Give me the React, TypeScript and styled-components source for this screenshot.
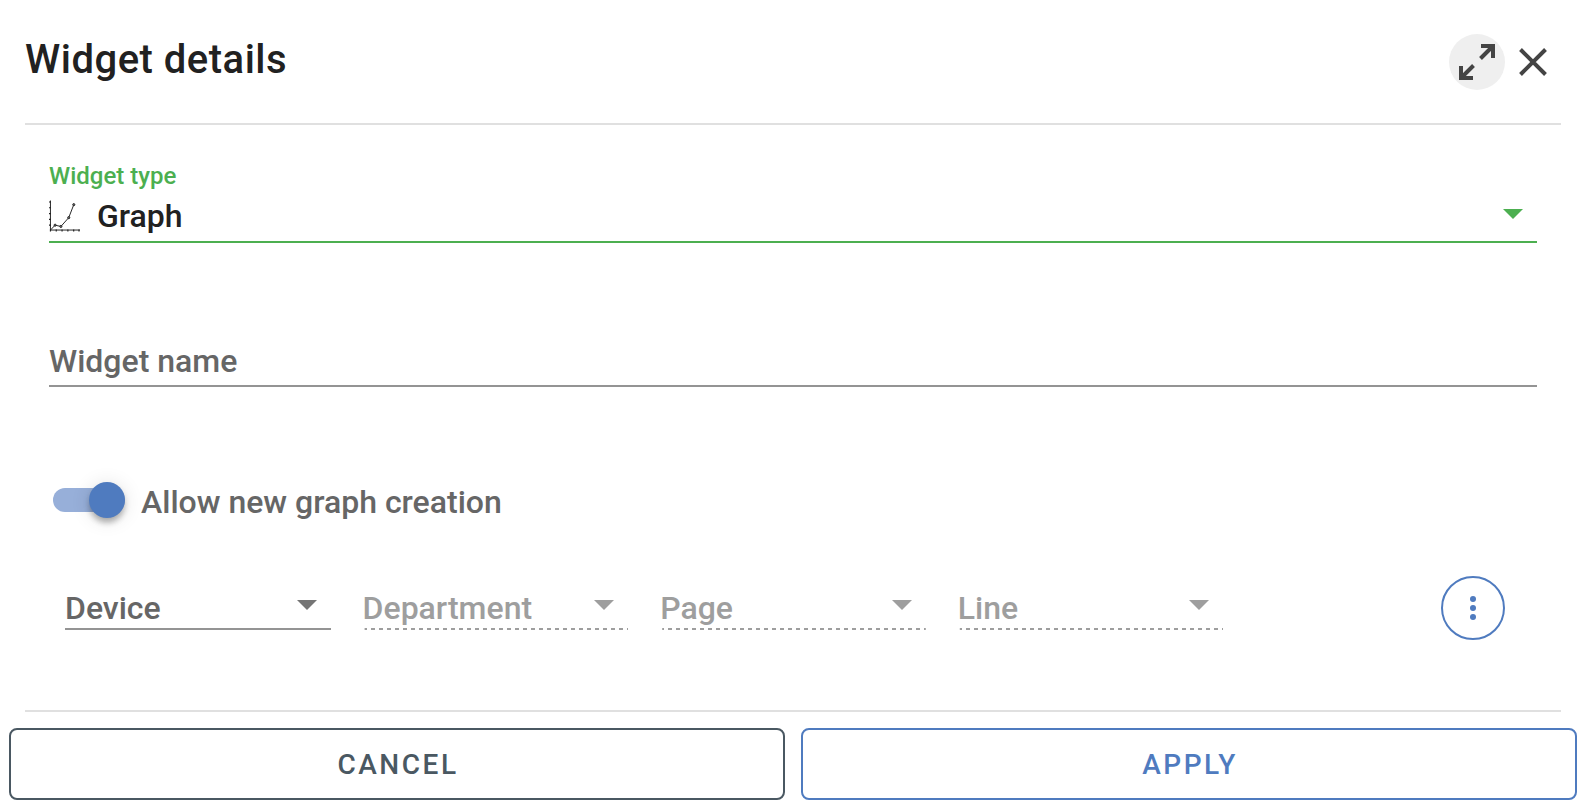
import React, { useState } from "react";
import styled, { createGlobalStyle, css } from "styled-components";

const green = "#4caf50";
const blue = "#4f7bbf";
const slate = "#4a5862";
const ink = "#212121";
const muted = "#666666";
const faded = "#9e9e9e";
const line = "#e0e0e0";

const GlobalStyle = createGlobalStyle`
  *, *::before, *::after { box-sizing: border-box; }
  body {
    margin: 0;
    background: #ffffff;
    color: ${ink};
    font-family: Roboto, "Liberation Sans", sans-serif;
    font-size: 32px;
    font-weight: 500;
  }
  button, input, select { font: inherit; color: inherit; }
`;

const Dialog = styled.main`
  padding: 0 11px 8px 9px;
`;

const Header = styled.header`
  display: flex;
  justify-content: space-between;
  align-items: flex-start;
  margin: 0 16px;
  padding: 34px 0 33px;
  border-bottom: 2px solid ${line};
`;

const Title = styled.h1`
  margin: 0;
  font-size: 40px;
  font-weight: 500;
  line-height: 52px;
  letter-spacing: 0.0125em;
`;

const HeaderActions = styled.div`
  display: flex;
`;

const IconButton = styled.button<{ $filled?: boolean }>`
  display: grid;
  place-items: center;
  width: 56px;
  height: 56px;
  padding: 0;
  border: 0;
  border-radius: 50%;
  background: ${(p) => (p.$filled ? "#efefef" : "transparent")};
  color: #444444;
  cursor: pointer;
`;

const Content = styled.form`
  margin: 0 16px;
  padding: 37px 24px 70px;
  border-bottom: 2px solid ${line};
`;

const TypeField = styled.div`
  margin-bottom: 94px;
`;

const FieldLabel = styled.label`
  display: block;
  color: ${green};
  font-size: 24px;
  line-height: 28px;
`;

const control = css`
  display: block;
  width: 100%;
  min-width: 0;
  padding: 0;
  border: 0;
  border-radius: 0;
  outline: 0;
  background: transparent;
  appearance: none;
`;

const SelectBox = styled.div<{ $tone: "active" | "plain" | "disabled" }>`
  position: relative;
  display: flex;
  align-items: center;
  gap: 17px;
  color: ${(p) => (p.$tone === "active" ? ink : p.$tone === "plain" ? muted : faded)};
  border-bottom: 2px solid
    ${(p) => (p.$tone === "active" ? green : p.$tone === "plain" ? "#949494" : "transparent")};

  ${(p) =>
    p.$tone === "disabled" &&
    css`
      &::after {
        content: "";
        position: absolute;
        inset: 100% 0 auto;
        height: 2px;
        background: repeating-linear-gradient(to right, ${faded} 0 4px, transparent 4px 8px);
        clip-path: inset(0 0 0 2px);
      }
    `}
`;

const Select = styled.select<{ $tall?: boolean }>`
  ${control}
  height: ${(p) => (p.$tall ? 51 : 40)}px;
  opacity: 1;
  cursor: pointer;
  &:disabled { cursor: default; }
`;

const Caret = styled.svg<{ $tall?: boolean; $color: string }>`
  position: absolute;
  top: ${(p) => (p.$tall ? 19 : 12)}px;
  right: 14px;
  width: 20px;
  height: 10px;
  fill: ${(p) => p.$color};
  pointer-events: none;
`;

const NameInput = styled.input`
  ${control}
  height: 50px;
  margin-bottom: 95px;
  border-bottom: 2px solid #949494;
  &::placeholder { color: ${muted}; opacity: 1; }
`;

const ToggleLabel = styled.label`
  display: flex;
  width: fit-content;
  gap: 16px;
  margin: 0 0 54px 4px;
  color: ${muted};
  line-height: 40px;
  cursor: pointer;
`;

const Toggle = styled.input`
  position: relative;
  flex: none;
  width: 72px;
  height: 36px;
  margin: 0;
  appearance: none;

  &::before {
    content: "";
    position: absolute;
    inset: 6px 0;
    border-radius: 12px;
    background: #bdbdbd;
  }
  &::after {
    content: "";
    position: absolute;
    top: 0;
    left: 0;
    width: 36px;
    height: 36px;
    border-radius: 50%;
    background: #fafafa;
    box-shadow: 0 6px 6px -2px rgba(0, 0, 0, 0.2), 0 4px 6px rgba(0, 0, 0, 0.14),
      0 2px 20px rgba(0, 0, 0, 0.12);
  }
  &:checked::before { background: #97afd9; }
  &:checked::after {
    left: 36px;
    background: ${blue};
  }
`;

const FilterRow = styled.div`
  display: grid;
  grid-template-columns: repeat(5, minmax(0, 1fr));
`;

const FilterCell = styled.div`
  padding: 12px 16px 0;
`;

const MenuCell = styled.div`
  display: flex;
  justify-content: flex-end;
  padding-right: 32px;
`;

const MenuButton = styled(IconButton)`
  width: 64px;
  height: 64px;
  border: 2px solid ${blue};
  color: ${blue};
`;

const Footer = styled.footer`
  display: grid;
  grid-template-columns: 1fr 1fr;
  gap: 16px;
  padding-top: 16px;
`;

const ActionButton = styled.button<{ $color: string }>`
  height: 72px;
  padding: 0 0 0 2px;
  border: 2px solid ${(p) => p.$color};
  border-radius: 8px;
  background: #ffffff;
  color: ${(p) => p.$color};
  font-size: 28px;
  font-weight: 500;
  letter-spacing: 0.09em;
  text-transform: uppercase;
  cursor: pointer;
`;

const CaretIcon = ({ color, tall }: { color: string; tall?: boolean }) => (
  <Caret $color={color} $tall={tall} viewBox="0 0 20 10" aria-hidden="true">
    <path d="M0 0H20L10 10Z" />
  </Caret>
);

const ExpandIcon = () => (
  <svg width="36" height="36" viewBox="0 0 36 36" fill="none" stroke="currentColor" strokeWidth="4" aria-hidden="true">
    <path d="M22 2H34V14M34 2L21.5 14.5M2 22V34H14M2 34L14.5 21.5" />
  </svg>
);

const CloseIcon = () => (
  <svg width="28" height="28" viewBox="0 0 28 28" fill="none" stroke="currentColor" strokeWidth="4" aria-hidden="true">
    <path d="M1.5 1.5L26.5 26.5M26.5 1.5L1.5 26.5" />
  </svg>
);

const GraphIcon = () => (
  <svg width="32" height="32" viewBox="0 0 32 32" fill="none" stroke="#222222" aria-hidden="true">
    <path d="M1.5 0V30.5H32" />
    <path
      strokeWidth="1.2"
      d="M0 1.5H2M0 7.5H2M0 13.5H2M0 19.5H2M0 25.5H2M1.5 30V32M7.5 30V32M13.5 30V32M19.5 30V32M25.5 30V32M31 30V32"
    />
    <path d="M1.5 30.5L6.3 25.5L12.3 26.8L20.4 17.7L25.6 4.3" />
    <g fill="#777777">
      <circle cx="6.3" cy="25.5" r="1.1" />
      <circle cx="12.3" cy="26.8" r="1.1" />
      <circle cx="20.4" cy="17.7" r="1.1" />
      <circle cx="25.6" cy="4.3" r="1.1" />
    </g>
  </svg>
);

const DotsIcon = () => (
  <svg width="6" height="24" viewBox="0 0 6 24" fill="currentColor" aria-hidden="true">
    <circle cx="3" cy="3" r="3" />
    <circle cx="3" cy="12" r="3" />
    <circle cx="3" cy="21" r="3" />
  </svg>
);

const filters = [
  { name: "Device", disabled: false },
  { name: "Department", disabled: true },
  { name: "Page", disabled: true },
  { name: "Line", disabled: true },
];

export default function App() {
  const [name, setName] = useState("");
  const [allow, setAllow] = useState(true);

  return (
    <>
      <GlobalStyle />
      <Dialog>
        <Header>
          <Title>Widget details</Title>
          <HeaderActions>
            <IconButton type="button" $filled aria-label="Expand">
              <ExpandIcon />
            </IconButton>
            <IconButton type="button" aria-label="Close">
              <CloseIcon />
            </IconButton>
          </HeaderActions>
        </Header>

        <Content id="widget-form">
          <TypeField>
            <FieldLabel htmlFor="widget-type">Widget type</FieldLabel>
            <SelectBox $tone="active">
              <GraphIcon />
              <Select id="widget-type" $tall>
                <option>Graph</option>
              </Select>
              <CaretIcon color={green} tall />
            </SelectBox>
          </TypeField>

          <NameInput
            aria-label="Widget name"
            placeholder="Widget name"
            value={name}
            onChange={(e) => setName(e.target.value)}
          />

          <ToggleLabel>
            <Toggle type="checkbox" role="switch" checked={allow} onChange={(e) => setAllow(e.target.checked)} />
            Allow new graph creation
          </ToggleLabel>

          <FilterRow>
            {filters.map((f) => (
              <FilterCell key={f.name}>
                <SelectBox $tone={f.disabled ? "disabled" : "plain"}>
                  <Select aria-label={f.name} disabled={f.disabled}>
                    <option>{f.name}</option>
                  </Select>
                  <CaretIcon color={f.disabled ? faded : "#757575"} />
                </SelectBox>
              </FilterCell>
            ))}
            <MenuCell>
              <MenuButton type="button" aria-label="More options">
                <DotsIcon />
              </MenuButton>
            </MenuCell>
          </FilterRow>
        </Content>

        <Footer>
          <ActionButton type="button" $color={slate}>Cancel</ActionButton>
          <ActionButton type="submit" form="widget-form" $color={blue}>Apply</ActionButton>
        </Footer>
      </Dialog>
    </>
  );
}
